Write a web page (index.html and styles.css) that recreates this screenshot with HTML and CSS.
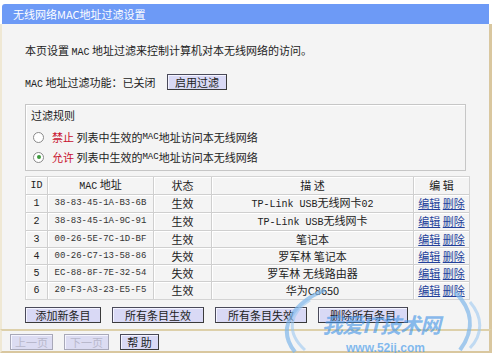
FILE: index.html
```html
<!DOCTYPE html>
<html lang="zh-CN">
<head>
<meta charset="utf-8">
<link rel="stylesheet" href="styles.css">
</head>
<body>
<div class="frame">
  <div class="title">无线网络MAC地址过滤设置</div>
  <div class="main">
    <p class="intro">本页设置 <span class="lat">MAC</span> 地址过滤来控制计算机对本无线网络的访问。</p>
    <div class="func">
      <span class="func-label"><span class="lat">MAC</span> 地址过滤功能：已关闭</span>
      <span class="btn btn-enable">启用过滤</span>
    </div>
    <div class="rules">
      <div class="legend">过滤规则</div>
      <div class="radio-row"><span class="radio"></span><span class="red">禁止</span> 列表中生效的<span class="lat sm">MAC</span>地址访问本无线网络</div>
      <div class="radio-row"><span class="radio checked"></span><span class="red">允许</span> 列表中生效的<span class="lat sm">MAC</span>地址访问本无线网络</div>
    </div>
    <table class="list">
      <colgroup>
        <col class="c-id"><col class="c-mac"><col class="c-st"><col class="c-desc"><col class="c-edit">
      </colgroup>
      <thead>
        <tr><th class="lat">ID</th><th><span class="lat">MAC</span> 地址</th><th>状态</th><th>描 述</th><th>编 辑</th></tr>
      </thead>
      <tbody>
        <tr><td class="lat">1</td><td class="mac">38-83-45-1A-B3-6B</td><td>生效</td><td><span class="lat">TP-Link USB</span>无线网卡<span class="lat">02</span></td><td><a>编辑</a> <a>删除</a></td></tr>
        <tr><td class="lat">2</td><td class="mac">38-83-45-1A-9C-91</td><td>生效</td><td><span class="lat">TP-Link USB</span>无线网卡</td><td><a>编辑</a> <a>删除</a></td></tr>
        <tr><td class="lat">3</td><td class="mac">00-26-5E-7C-1D-BF</td><td>生效</td><td>笔记本</td><td><a>编辑</a> <a>删除</a></td></tr>
        <tr><td class="lat">4</td><td class="mac">00-26-C7-13-58-86</td><td>失效</td><td>罗军林 笔记本</td><td><a>编辑</a> <a>删除</a></td></tr>
        <tr><td class="lat">5</td><td class="mac">EC-88-8F-7E-32-54</td><td>失效</td><td>罗军林 无线路由器</td><td><a>编辑</a> <a>删除</a></td></tr>
        <tr><td class="lat">6</td><td class="mac">20-F3-A3-23-E5-F5</td><td>生效</td><td>华为C8650</td><td><a>编辑</a> <a>删除</a></td></tr>
      </tbody>
    </table>
    <div class="actions">
      <span class="btn w76">添加新条目</span>
      <span class="btn w92">所有条目生效</span>
      <span class="btn w92">所有条目失效</span>
      <span class="btn w90">删除所有条目</span>
    </div>
  </div>
  <div class="nav">
    <span class="btn dis w42">上一页</span>
    <span class="btn dis w46">下一页</span>
    <span class="btn w38">帮 助</span>
  </div>
  <div class="watermark">
    <svg class="wings" width="230" height="75" viewBox="0 0 230 75">
      <path d="M70 8 C40 20 20 45 40 70" fill="none" stroke="#7fb6ea" stroke-width="4" opacity="0.7"/>
      <path d="M55 18 C35 30 30 50 50 68" fill="none" stroke="#9cc8f0" stroke-width="3" opacity="0.6"/>
      <path d="M200 10 C215 25 222 45 205 68" fill="none" stroke="#7fb6ea" stroke-width="4" opacity="0.7"/>
      <path d="M215 20 C228 35 228 52 215 66" fill="none" stroke="#9cc8f0" stroke-width="3" opacity="0.6"/>
    </svg>
    <div class="wm-big">我爱IT技术网</div>
    <div class="wm-url">www.52ij.com</div>
  </div>
</div>
</body>
</html>
```
FILE: styles.css
```css
* { box-sizing: border-box; }
body {
  margin: 0;
  background: #fff;
  font-family: "Noto Sans CJK SC", sans-serif;
  font-size: 11px;
  color: #222;
}
.lat { font-family: "Liberation Mono", "Noto Sans CJK SC", monospace; font-size: 10px; }
.lat.sm { font-size: 9px; }
.frame {
  position: relative;
  margin-top: 4px;
  width: 492px;
}
.title {
  margin: 0 3px 0 2px;
  height: 20px;
  background: #6d9af6;
  color: #fff;
  line-height: 20px;
  padding-left: 11px;
  border-radius: 3px 0 0 0;
  font-size: 11px;
}
.main {
  border-left: 2px solid #efe8d4;
  border-right: 3px solid #d9c79f;
  background: #f4f4f4;
  padding: 19px 0 0 23px;
  height: 305px;
}
.intro { margin: 0; line-height: 14px; height: 14px; }
.func {
  display: flex;
  align-items: center;
  margin-top: 17px;
  height: 16px;
}
.func-label { width: 142px; }
.btn {
  display: inline-flex;
  align-items: center;
  justify-content: center;
  height: 16px;
  background: #d9d9f5;
  border: 1px solid #4a4a5a;
  border-right-color: #3a3a3a;
  border-bottom-color: #3a3a3a;
  box-shadow: inset 1px 1px 0 #f4f4ff;
  color: #222;
  line-height: 14px;
}
.btn-enable { width: 60px; }
.rules {
  margin-top: 14px;
  width: 441px;
  height: 67px;
  border: 1px solid #c6c6c6;
  box-shadow: inset 1px 1px 0 #fff;
  padding: 3px 0 0 5px;
}
.legend { line-height: 14px; height: 14px; }
.radio-row {
  display: flex;
  align-items: center;
  height: 14px;
  margin-top: 6px;
  padding-left: 2px;
  white-space: pre;
}
.rules .legend + .radio-row { margin-top: 8px; }
.radio {
  width: 11px;
  height: 11px;
  border-radius: 50%;
  border: 1px solid #8a8a8a;
  background: #fff;
  margin-right: 8px;
  position: relative;
}
.radio.checked::after {
  content: "";
  position: absolute;
  left: 2.5px;
  top: 2.5px;
  width: 4px;
  height: 4px;
  border-radius: 50%;
  background: #3d9a3d;
}
.red { color: #c8102e; }
.list {
  margin-top: 5px;
  width: 443px;
  border-collapse: separate;
  border-spacing: 0;
  border: 1px solid #d4d4d4;
  table-layout: fixed;
}
.c-id { width: 22px; }
.c-mac { width: 106px; }
.c-st { width: 58px; }
.c-desc { width: 202px; }
.c-edit { width: 55px; }
.list th, .list td {
  height: 17px;
  padding: 0;
  text-align: center;
  font-weight: normal;
  border-right: 1px solid #cfcfcf;
  border-bottom: 1px solid #cfcfcf;
  box-shadow: inset 1px 1px 0 #fff;
  line-height: 15px;
  white-space: nowrap;
  overflow: hidden;
  color: #222;
}
.list td.mac { font-family: "Liberation Mono", monospace; font-size: 9px; color: #333; }
.list tr > :last-child { border-right: none; }
.list tbody tr:last-child td { border-bottom: none; }
.list a { color: #23409a; text-decoration: underline; }
.actions {
  display: flex;
  gap: 11px;
  margin-top: 7px;
}
.w76 { width: 76px; }
.w92 { width: 92px; }
.w90 { width: 90px; }
.w42 { width: 43px; }
.w46 { width: 45px; }
.w38 { width: 39px; }
.nav {
  display: flex;
  gap: 11px;
  height: 24px;
  padding: 3px 0 0 8px;
  background: #f4f4f4;
  border-top: 2px solid #ddd0aa;
  border-left: 2px solid #efe8d4;
  border-right: 3px solid #d9c79f;
  border-bottom: 2px solid #d9c79f;
}
.btn.dis {
  color: #b8b8cc;
  border-color: #a8a8b8;
  background: #dcdcf2;
}
.watermark {
  position: absolute;
  left: 250px;
  top: 278px;
  width: 240px;
  height: 75px;
  pointer-events: none;
}
.wings { position: absolute; left: 5px; top: 0; }
.wm-big {
  position: absolute;
  left: 72px;
  top: 31px;
  font-size: 21px;
  line-height: 22px;
  font-weight: bold;
  font-style: italic;
  color: rgba(70, 150, 230, 0.65);
  letter-spacing: -1px;
}
.wm-url {
  position: absolute;
  left: 96px;
  top: 59px;
  font-family: "Liberation Sans", sans-serif;
  font-size: 12px;
  line-height: 14px;
  font-weight: bold;
  color: rgba(90, 165, 235, 0.75);
}
```
